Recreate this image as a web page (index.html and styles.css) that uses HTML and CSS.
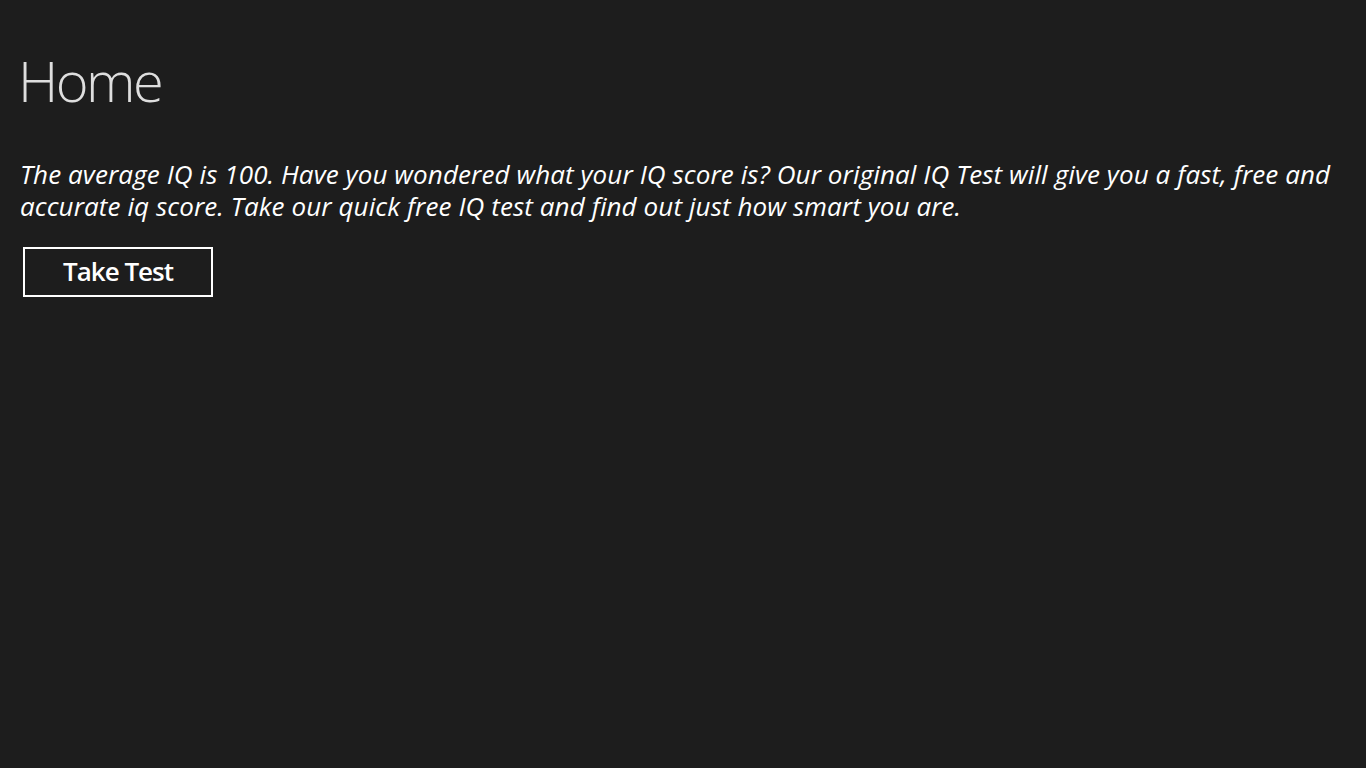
FILE: index.html
```html
<!DOCTYPE html>
<html lang="en">
<head>
<meta charset="utf-8">
<title>Home</title>
<link rel="stylesheet" href="styles.css">
</head>
<body>
<main class="page">
  <h1 class="page-title">Home</h1>
  <p class="intro">The average IQ is 100. Have you wondered what your IQ score is? Our original IQ Test will give you a fast, free and accurate iq score. Take our quick free IQ test and find out just how smart you are.</p>
  <button class="take-test" type="button">Take Test</button>
</main>
</body>
</html>
```
FILE: styles.css
```css
html, body {
  margin: 0;
  padding: 0;
  background: #1d1d1d;
  height: 100%;
}
body {
  font-family: "Open Sans", "Noto Sans", sans-serif;
  color: #ffffff;
}
.page {
  padding: 40px 20px 0 20px;
  display: flex;
  flex-direction: column;
  align-items: flex-start;
}
.page-title {
  margin: 0 0 0 -2px;
  font-weight: 300;
  font-size: 56px;
  line-height: 80px;
  color: #dedede;
  letter-spacing: -2.5px;
}
.intro {
  margin: 38px 0 0 0;
  font-style: italic;
  font-size: 26px;
  line-height: 32px;
  letter-spacing: 0.1px;
  color: #ffffff;
  max-width: 1330px;
}
.take-test {
  margin: 25px 0 0 3px;
  width: 190px;
  height: 50px;
  background: transparent;
  border: 2px solid #ffffff;
  color: #ffffff;
  font-family: inherit;
  font-weight: 600;
  font-size: 26px;
  line-height: 30px;
  letter-spacing: -1px;
  padding: 0 0 3px 0;
}
```
